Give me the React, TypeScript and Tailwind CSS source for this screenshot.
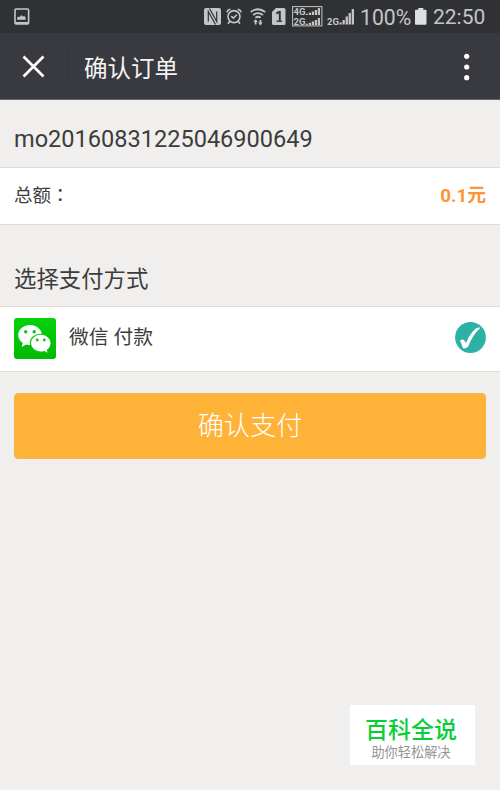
import type { ReactNode } from "react";

function PictureIcon() {
  return (
    <svg width="16" height="17" viewBox="0 0 16 17" className="text-[#c4c6c6]">
      <rect x="1" y="1" width="13.6" height="15" rx="1" fill="none" stroke="currentColor" strokeWidth="1.6" />
      <path d="M1 14h13.6v2H1z" fill="currentColor" />
      <path d="M3.2 11.7V9.600l1.700-1 1 .5 1.500-2 1.500 1.700 1.200-1 1.500 1.600v2.300z" fill="currentColor" />
    </svg>
  );
}

function NfcIcon() {
  return (
    <svg width="17" height="17" viewBox="0 0 17 17">
      <rect width="17" height="17" rx="2" fill="currentColor" />
      <path d="M4.300 13.500V3.500L11.500 16.500M12.700 3.500v10L5.500 .5" fill="none" stroke="#303135" strokeWidth="1.200" />
    </svg>
  );
}

function AlarmIcon() {
  return (
    <svg width="16" height="17" viewBox="0 0 16 17" fill="none" stroke="currentColor" strokeWidth="1.6">
      <circle cx="8" cy="8.6" r="6" />
      <path d="M1 4.300Q1.300 1.600 4.400 1.200M15 4.300Q14.700 1.600 11.600 1.200M3.800 13.300 2 15.800M12.200 13.300l1.800 2.500" />
      <path d="m5.200 8.200 2.200 2 3.400-3.400" />
    </svg>
  );
}

function WifiIcon() {
  return (
    <svg width="16" height="18" viewBox="0 0 16 18" fill="none" stroke="currentColor" strokeWidth="1.8">
      <path d="M.8 4Q8-1.600 15.200 4M3.100 7Q8 3.200 12.900 7M5.400 9.800Q8 7.600 10.600 9.800" />
      <path d="M5.600 16.500v-3.200M10.400 12v3.200" />
      <path d="m3.300 14 2.300-2.800L7.900 14zM8.100 14.500l2.300 2.900 2.300-2.900z" fill="currentColor" stroke="none" />
    </svg>
  );
}

function SimIcon() {
  return (
    <svg width="14" height="17" viewBox="0 0 14 17">
      <path d="M4 0h8q1.500 0 1.500 1.500v14Q13.500 17 12 17H1.500Q0 17 0 15.500V4z" fill="currentColor" />
      <path d="M4.300 5.600 7 4h.8v9.200" fill="none" stroke="#303135" strokeWidth="1.900" />
      <path d="M4.400 13.200h5.700" stroke="#303135" strokeWidth="1.300" />
    </svg>
  );
}

function DualSignalIcon() {
  return (
    <svg width="31" height="21" viewBox="0 0 31 21" fill="currentColor">
      <rect x=".6" y=".6" width="29.300" height="19.300" fill="none" stroke="currentColor" />
      <text x="1.500" y="9" fontSize="9.500" fontWeight="700" textLength="12" lengthAdjust="spacingAndGlyphs">4G</text>
      <text x="1.500" y="19" fontSize="9.500" fontWeight="700" textLength="12" lengthAdjust="spacingAndGlyphs">2G</text>
      <path d="M13.800 7.800h2V9h-2zM16.800 6.800h2.200V9h-2.200zM19.800 5.500H22V9h-2.200zM22.800 4H25v5h-2.200zM25.800 2H28v7h-2.200z" />
      <path d="M13.800 17.800h2V19h-2zM16.800 16.800h2.200V19h-2.200zM19.800 15.500H22V19h-2.200zM22.800 14H25v5h-2.200zM25.800 12H28v7h-2.200z" />
    </svg>
  );
}

function SignalIcon() {
  return (
    <svg width="29" height="17" viewBox="0 0 29 17" fill="currentColor">
      <text x="0" y="16.500" fontSize="9" fontWeight="700" textLength="12" lengthAdjust="spacingAndGlyphs">2G</text>
      <path d="M12.500 14.500h2.200v2h-2.200zM15.500 12h2.300v4.500h-2.300zM18.600 8.500h2.300v8h-2.300zM21.600 5h2.300v11.500h-2.300zM24.700 1H27v15.500h-2.300z" />
    </svg>
  );
}

function BatteryIcon() {
  return (
    <svg width="12" height="17" viewBox="0 0 12 17" fill="#dde0df">
      <path d="M3.300 0h5v1.700h2.500q.7 0 .7.700V16q0 .7-.7.700H.7Q0 16.700 0 16V2.400q0-.7.700-.7h2.600z" />
    </svg>
  );
}

function StatusBar() {
  return (
    <div className="flex h-[33px] items-center bg-[#303135] pr-[14px] pl-[14px] font-[Roboto,sans-serif] text-[#c4c6c6]">
      <PictureIcon />
      <div className="ml-auto flex items-center">
        <NfcIcon />
        <span className="ml-[5px]"><AlarmIcon /></span>
        <span className="ml-[8px]"><WifiIcon /></span>
        <span className="ml-[6px]"><SimIcon /></span>
        <span className="ml-[6px]"><DualSignalIcon /></span>
        <span className="ml-[4px]"><SignalIcon /></span>
        <span className="ml-[4px] w-[55px] pt-px text-[21.200px] leading-[33px]">100%</span>
        <BatteryIcon />
        <span className="ml-[6px] w-[53px] pt-px text-[21px] leading-[33px]">22:50</span>
      </div>
    </div>
  );
}

function TitleBar() {
  return (
    <header className="flex h-[67px] items-center border-b border-[#66676a] bg-[#393a3f] pr-[30px] pl-[22px]">
      <svg width="23" height="23" viewBox="0 0 23 23" fill="none" stroke="#fff" strokeWidth="2.700" className="mt-px">
        <path d="m1.500 1.500 20 20M21.500 1.500l-20 20" />
      </svg>
      <div className="ml-[22px] h-[34px] w-px bg-[#333438]" />
      <h1 className="ml-[16px] pt-[5px] text-[23.500px] leading-8 text-[#f4f4f4]">确认订单</h1>
      <svg width="6" height="28" viewBox="0 0 6 28" fill="#fff" className="mt-px ml-auto">
        <circle cx="2.700" cy="3.300" r="2.600" />
        <circle cx="2.700" cy="14" r="2.600" />
        <circle cx="2.700" cy="24.700" r="2.600" />
      </svg>
    </header>
  );
}

function WeChatIcon() {
  return (
    <svg width="42" height="41" viewBox="0 0 42 41" className="mt-[2px]">
      <defs>
        <linearGradient id="wechat" x1="0" y1="0" x2="0" y2="1">
          <stop offset="0" stopColor="#05d20c" />
          <stop offset="1" stopColor="#02b908" />
        </linearGradient>
      </defs>
      <rect width="42" height="41" rx="3" fill="url(#wechat)" />
      <path d="M16 7C9.400 7 4.200 11.500 4.200 17c0 3.200 1.700 6 4.500 7.900l-1.100 4 4.500-2.500c1.200.4 2.500.6 3.900.6 6.600 0 11.900-4.500 11.900-10S22.600 7 16 7z" fill="#fff" />
      <path d="M26.700 16.200c-5.800 0-10.300 3.900-10.300 8.900s4.500 9 10.300 9c1.300 0 2.500-.2 3.600-.6l4.200 2.200-1.100-3.600c2.300-1.600 3.700-4.100 3.700-7 0-5-4.600-8.900-10.400-8.900z" fill="#fff" stroke="#05c40a" strokeWidth="1.100" />
      <g fill="#04ca0b">
        <circle cx="11.700" cy="13.700" r="1.700" />
        <circle cx="20.200" cy="13.700" r="1.700" />
        <circle cx="23.200" cy="22" r="1.400" />
        <circle cx="30.300" cy="22" r="1.400" />
      </g>
    </svg>
  );
}

function CheckedIcon() {
  return (
    <svg width="31" height="31" viewBox="0 0 31 31">
      <circle cx="15.500" cy="15.500" r="15.400" fill="#2cb2a5" />
      <path d="M5 18.700Q7.500 16.500 9.300 18.500L10.900 21Q15 11.500 21 6.300Q23 5 25.600 5.600Q17.500 13.200 13.200 24.500Q10.500 27 7.900 26.300Q7 22 5 18.700z" fill="#fff" />
    </svg>
  );
}

function Row({ className, children }: { className: string; children: ReactNode }) {
  return (
    <div className={`flex items-center border-y border-[#dedbd1] bg-white px-[14px] ${className}`}>
      {children}
    </div>
  );
}

export default function App() {
  return (
    <div className="flex h-[790px] w-[500px] flex-col overflow-hidden bg-[#f0efed] font-[Roboto,'Noto_Sans_CJK_SC',sans-serif] text-[#3c3c3c]">
      <StatusBar />
      <TitleBar />

      <div className="h-[67px] px-[14px] pt-[23px] text-[23.550px] leading-8">mo20160831225046900649</div>
      <Row className="h-[58px] justify-between text-[18.500px]">
        <span>
          总额<span className="font-['Noto_Sans_CJK_TC',sans-serif]" lang="zh-TW">：</span>
        </span>
        <span className="pt-px text-[18.800px] font-bold text-[#ff9436]">0.1元</span>
      </Row>

      <div className="h-[81px] px-[14px] pt-[38px] text-[22.400px] leading-8">选择支付方式</div>
      <Row className="h-[66px] pb-[3px]">
        <WeChatIcon />
        <span className="ml-[13px] pt-px text-[19.800px]">微信 付款</span>
        <span className="ml-auto"><CheckedIcon /></span>
      </Row>

      <div className="px-[14px] pt-[21px]">
        <button className="h-[66px] w-full rounded-[4px] border border-[#f6b54c] bg-[#feb338] pt-[2px] text-[26.200px] font-light text-white">
          确认支付
        </button>
      </div>

      <div className="mt-auto mr-[25px] mb-[25px] flex h-[60px] w-[125px] flex-col items-center self-end bg-white pr-[3px]">
        <div className="mt-[11px] text-[23px] leading-[30px] font-medium text-[#09cf36]">百科全说</div>
        <div className="text-[13.200px] leading-[14px] text-[#949494]">助你轻松解决</div>
      </div>
    </div>
  );
}
